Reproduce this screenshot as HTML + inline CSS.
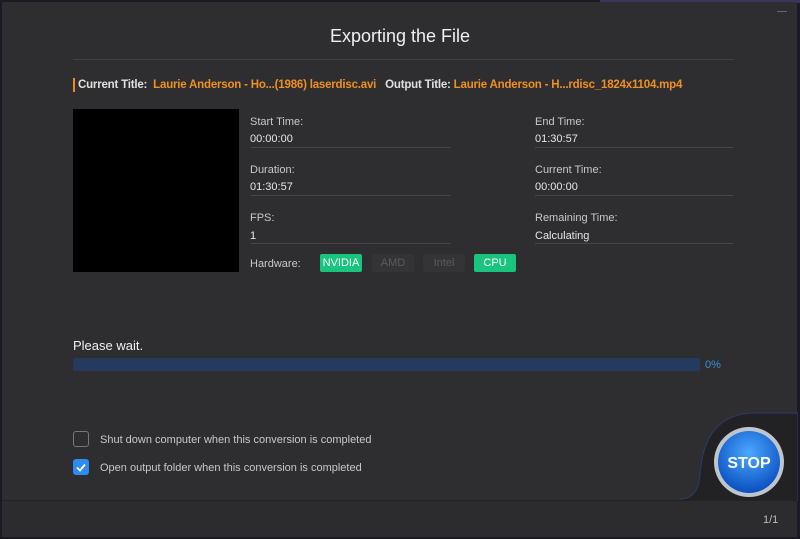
<!DOCTYPE html>
<html><head><style>
*{margin:0;padding:0;box-sizing:border-box}
body{width:800px;height:539px;background:#1b1a24;position:relative;overflow:hidden;font-family:"Liberation Sans",sans-serif;font-size:11px;color:#d8d8d8}
#dlg{position:absolute;left:2px;top:2px;width:795px;height:535px;background:#2e2e30}
.a{position:absolute;white-space:nowrap}
.lab{color:#c8c8c8}
.val{color:#e6e6e6}
.ul{position:absolute;height:1px;background:#474749;width:200px}
.btn{position:absolute;top:254px;height:18px;width:42px;border-radius:2px;text-align:center;line-height:18px;font-size:11px}
</style></head><body>
<div style="position:absolute;left:600px;top:0;width:220px;height:3px;background:#3a3560"></div>
<div id="dlg"></div>
<div class="a" style="left:777px;top:11px;width:10px;height:1px;background:#666"></div>
<div class="a" style="left:0;width:800px;top:26px;text-align:center;font-size:18px;color:#f0f0f0">Exporting the File</div>
<div class="a" style="left:73px;top:59px;width:661px;height:1px;background:#404042"></div>
<div class="a" style="left:73px;top:78px;width:2px;height:14px;background:#f08a18"></div>
<div class="a" style="left:78px;top:79px;font-size:11.5px;font-weight:bold;color:#e0e0e0;letter-spacing:-0.2px">Current Title: <span style="color:#f09020">&nbsp;Laurie Anderson - Ho...(1986) laserdisc.avi</span> &nbsp; Output Title: <span style="color:#f09020">Laurie Anderson - H...rdisc_1824x1104.mp4</span></div>
<div class="a" style="left:73px;top:109px;width:166px;height:163px;background:#000"></div>

<div class="a lab" style="left:250px;top:116px">Start Time:</div><div class="a val" style="left:250px;top:133px">00:00:00</div><div class="ul" style="left:250px;top:147px"></div>
<div class="a lab" style="left:250px;top:164px">Duration:</div><div class="a val" style="left:250px;top:181px">01:30:57</div><div class="ul" style="left:250px;top:195px"></div>
<div class="a lab" style="left:250px;top:212px">FPS:</div><div class="a val" style="left:250px;top:230px">1</div><div class="ul" style="left:250px;top:243px"></div>
<div class="a lab" style="left:535px;top:116px">End Time:</div><div class="a val" style="left:535px;top:133px">01:30:57</div><div class="ul" style="left:535px;top:147px;width:198px"></div>
<div class="a lab" style="left:535px;top:164px">Current Time:</div><div class="a val" style="left:535px;top:181px">00:00:00</div><div class="ul" style="left:535px;top:195px;width:198px"></div>
<div class="a lab" style="left:535px;top:212px">Remaining Time:</div><div class="a val" style="left:535px;top:230px">Calculating</div><div class="ul" style="left:535px;top:243px;width:198px"></div>

<div class="a lab" style="left:250px;top:258px">Hardware:</div>
<div class="btn" style="left:320px;background:#18c47e;color:#fff">NVIDIA</div>
<div class="btn" style="left:372px;background:#343436;color:#5a5a5c">AMD</div>
<div class="btn" style="left:423px;background:#343436;color:#5a5a5c">Intel</div>
<div class="btn" style="left:474px;background:#18c47e;color:#fff">CPU</div>

<div class="a" style="left:73px;top:338px;font-size:13px;color:#f0f0f0">Please wait.</div>
<div class="a" style="left:73px;top:358px;width:627px;height:13px;background:#243a5e;border-radius:2px"></div>
<div class="a" style="left:705px;top:359px;color:#3b8fd8">0%</div>

<div class="a" style="left:73px;top:431px;width:16px;height:16px;border:1px solid #777;border-radius:3px"></div>
<div class="a lab" style="left:100px;top:434px">Shut down computer when this conversion is completed</div>
<div class="a" style="left:73px;top:459px;width:16px;height:16px;background:#2d8cf0;border-radius:3px"><svg width="16" height="16"><path d="M4 8.5l3 3 5-6" stroke="#fff" stroke-width="1.8" fill="none"/></svg></div>
<div class="a lab" style="left:100px;top:462px">Open output folder when this conversion is completed</div>

<svg class="a" style="left:680px;top:405px" width="118" height="96"><path d="M0 94 Q18 94 20 70 Q24 8 75 8 L118 8 L118 96 L0 96Z" fill="#222224" stroke="#2d3a66" stroke-width="1"/></svg>
<div class="a" style="left:2px;top:500px;width:795px;height:1px;background:#222"></div>
<div class="a" style="left:2px;top:501px;width:795px;height:36px;background:#2c2c2e"></div>
<svg class="a" style="left:713px;top:426px" width="72" height="72"><defs><radialGradient id="g" cx="50%" cy="35%" r="65%"><stop offset="0" stop-color="#4aa8ff"/><stop offset="1" stop-color="#0b4fc0"/></radialGradient></defs><circle cx="36" cy="36" r="35" fill="#bfc5cc"/><circle cx="36" cy="36" r="31" fill="url(#g)"/><text x="36" y="42" text-anchor="middle" font-family="Liberation Sans" font-weight="bold" font-size="16" fill="#fff">STOP</text></svg>
<div class="a" style="left:763px;top:514px;color:#bbb">1/1</div>
</body></html>
